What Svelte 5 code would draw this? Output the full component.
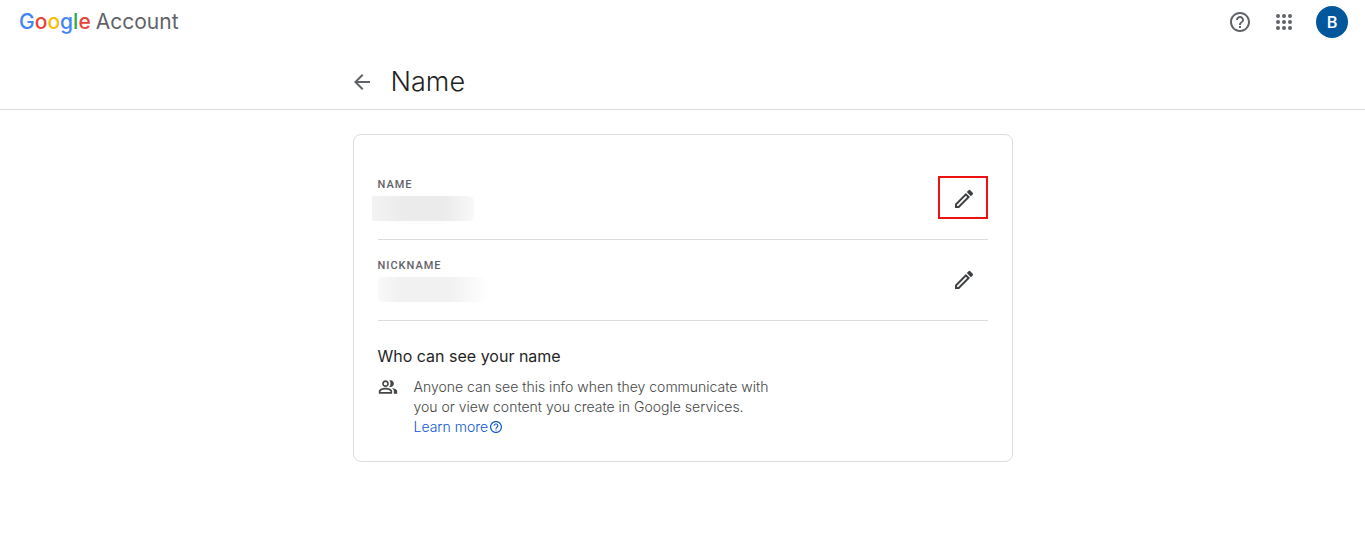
<script>
  const fields = [
    { id: 'name', label: 'Name', highlighted: true },
    { id: 'nickname', label: 'Nickname', highlighted: false }
  ];

  // Rows and columns of the app launcher dots
  const dots = [6, 12, 18];
</script>

<header class="top-bar">
  <a href="#home" class="brand" aria-label="Google Account">
    <span class="logo"><span class="blue">G</span><span class="red">o</span><span class="yellow">o</span><span class="blue">g</span><span class="green">l</span><span class="red">e</span></span>
    <span class="product">Account</span>
  </a>
  <div class="actions">
    <button class="icon-button" aria-label="Help">
      <svg viewBox="0 0 24 24" width="24" height="24">
        <path d="M11 18h2v-2h-2v2zm1-16C6.48 2 2 6.48 2 12s4.48 10 10 10 10-4.48 10-10S17.52 2 12 2zm0 18c-4.41 0-8-3.59-8-8s3.59-8 8-8 8 3.59 8 8-3.59 8-8 8zm0-14c-2.21 0-4 1.79-4 4h2c0-1.1.9-2 2-2s2 .9 2 2c0 2-3 1.75-3 5h2c0-2.25 3-2.5 3-5 0-2.21-1.79-4-4-4z" />
      </svg>
    </button>
    <button class="icon-button" aria-label="Google apps">
      <svg viewBox="0 0 24 24" width="24" height="24">
        {#each dots as cy}
          {#each dots as cx}
            <circle {cx} {cy} r="2" />
          {/each}
        {/each}
      </svg>
    </button>
    <button class="avatar" aria-label="Profile">B</button>
  </div>
</header>

<div class="title-bar">
  <div class="title">
    <a href="#back" class="back" aria-label="Back">
      <svg viewBox="3 2 20 20" width="20" height="20">
        <path d="M20 11H7.83l5.59-5.59L12 4l-8 8 8 8 1.41-1.41L7.83 13H20z" />
      </svg>
    </a>
    <h1>Name</h1>
  </div>
</div>

<main class="card">
  {#each fields as field}
    <div class="row">
      <div class="field">
        <div class="label">{field.label}</div>
        <div class="hidden-value {field.id}"></div>
      </div>
      <button class="edit" class:highlighted={field.highlighted} aria-label="Edit {field.label}">
        <svg viewBox="-1 0 24 24" width="24" height="24">
          <path fill-rule="evenodd" d="M3 16.9V21h4.1L18 10.1 13.9 6 3 16.9zM6.3 19H5v-1.3l8.9-8.9 1.3 1.3L6.3 19z" />
          <path d="M20.7 7.4a1.2 1.2 0 0 0 0-1.7l-2.4-2.4a1.2 1.2 0 0 0-1.7 0l-1.8 1.8 4.1 4.1 1.8-1.8z" />
        </svg>
      </button>
    </div>
  {/each}

  <section class="visibility">
    <h2>Who can see your name</h2>
    <div class="info">
      <svg class="people" viewBox="0 0 24 24" width="20" height="20">
        <path d="M9 12c2.21 0 4-1.79 4-4s-1.79-4-4-4-4 1.79-4 4 1.79 4 4 4zm0-6c1.1 0 2 .9 2 2s-.9 2-2 2-2-.9-2-2 .9-2 2-2zM9 13c-2.67 0-8 1.34-8 4v3h16v-3c0-2.66-5.33-4-8-4zm6 5H3v-.99C3.2 16.29 6.3 15 9 15s5.8 1.29 6 2v1zM15 12c2.21 0 4-1.79 4-4s-1.79-4-4-4c-.47 0-.91.1-1.33.24C14.5 5.27 15 6.58 15 8s-.5 2.73-1.33 3.76c.42.14.86.24 1.33.24zM16.67 13.13C18.04 14.06 19 15.32 19 17v3h4v-3c0-2.18-3.58-3.47-6.33-3.87z" />
      </svg>
      <p>
        Anyone can see this info when they communicate with you or view content you create in Google services.
        <a href="#learn-more" class="learn-more">Learn more<svg viewBox="2 2 20 20" width="12" height="12">
            <path d="M11 18h2v-2h-2v2zm1-16C6.48 2 2 6.48 2 12s4.48 10 10 10 10-4.48 10-10S17.52 2 12 2zm0 18c-4.41 0-8-3.59-8-8s3.59-8 8-8 8 3.59 8 8-3.59 8-8 8zm0-14c-2.21 0-4 1.79-4 4h2c0-1.1.9-2 2-2s2 .9 2 2c0 2-3 1.75-3 5h2c0-2.25 3-2.5 3-5 0-2.21-1.79-4-4-4z" />
          </svg></a>
      </p>
    </div>
  </section>
</main>

<style>
  :global(body) {
    background: #fff;
    color: #1f1f1f;
    font-family: Inter, Roboto, Arial, sans-serif;
  }

  button {
    border: 0;
    padding: 0;
    background: none;
    cursor: pointer;
  }

  a {
    text-decoration: none;
  }

  svg {
    display: block;
    fill: currentColor;
  }

  .top-bar {
    display: flex;
    justify-content: space-between;
    align-items: center;
    height: 44px;
    padding: 0 17px 0 19px;
  }

  .brand {
    display: flex;
    align-items: baseline;
    gap: 5px;
    color: #5f6368;
    font-size: 21px;
    line-height: 24px;
  }

  .logo {
    font-weight: 500;
  }

  .blue { color: #4285f4; }
  .red { color: #ea4335; }
  .yellow { color: #fbbc04; }
  .green { color: #34a853; }

  .actions {
    display: flex;
    align-items: center;
    gap: 20px;
  }

  .icon-button {
    color: #5f6368;
  }

  .avatar {
    width: 32px;
    height: 32px;
    border-radius: 50%;
    background: #01579b;
    color: #fff;
    font: 500 17px Roboto, sans-serif;
  }

  .title-bar {
    padding: 18px 0 7px;
    border-bottom: 1px solid #dadce0;
  }

  .title {
    display: flex;
    align-items: center;
    gap: 18px;
    max-width: 660px;
    margin: 0 auto;
  }

  .back {
    color: #5f6368;
  }

  h1 {
    margin: 0;
    font-size: 27px;
    font-weight: 300;
    line-height: 40px;
  }

  .card {
    box-sizing: border-box;
    max-width: 660px;
    margin: 24px auto;
    padding: 24px;
    border: 1px solid #dadce0;
    border-radius: 8px;
  }

  .row {
    display: flex;
    justify-content: space-between;
    align-items: center;
    height: 80px;
    border-bottom: 1px solid #dadce0;
  }

  .field {
    padding-bottom: 2px;
  }

  .label {
    margin-bottom: 2px;
    color: #5f6368;
    font: 500 11px/18px Roboto, sans-serif;
    letter-spacing: 1px;
    text-transform: uppercase;
  }

  .hidden-value {
    width: 110px;
    height: 25px;
    border-radius: 4px;
    background: linear-gradient(90deg, #f9f9f9, #f1f1f1 20%, #f1f1f1 65%, #f9f9f9 85%, #fff);
  }

  .hidden-value.name {
    width: 102px;
    margin-left: -6px;
    border-radius: 0 6px 6px 0;
    background: linear-gradient(90deg, #f3f3f3, #ebebeb 30%, #ebebeb 70%, #f8f8f8);
  }

  .edit {
    position: relative;
    display: flex;
    justify-content: center;
    align-items: center;
    width: 50px;
    height: 48px;
    color: #3c4043;
  }

  .highlighted::after {
    content: '';
    position: absolute;
    inset: 1px 0 4px;
    border: 2px solid #ee1111;
  }

  .visibility {
    padding-top: 23px;
  }

  h2 {
    margin: 0 0 9px;
    font-size: 16px;
    font-weight: 400;
    line-height: 24px;
  }

  .info {
    display: flex;
    gap: 16px;
    color: #444746;
  }

  .people {
    flex: none;
  }

  p {
    max-width: 364px;
    margin: 0;
    font-size: 14px;
    font-weight: 300;
    line-height: 20px;
  }

  .learn-more {
    display: flex;
    align-items: center;
    gap: 2px;
    color: #0b57d0;
  }
</style>
